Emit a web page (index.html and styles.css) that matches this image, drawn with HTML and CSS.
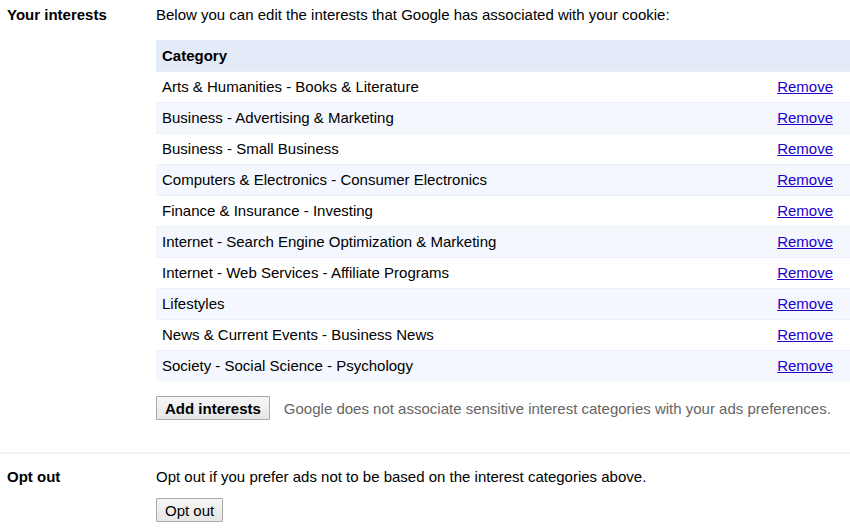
FILE: index.html
```html
<!DOCTYPE html>
<html>
<head>
<meta charset="utf-8">
<link rel="stylesheet" href="styles.css">
</head>
<body>
<div class="section">
  <div class="label">Your interests</div>
  <div class="content">
    <p class="intro">Below you can edit the interests that Google has associated with your cookie:</p>
    <table class="cats">
      <thead><tr><th>Category</th><th></th></tr></thead>
      <tbody>
        <tr><td>Arts &amp; Humanities - Books &amp; Literature</td><td class="act"><a href="#">Remove</a></td></tr>
        <tr><td>Business - Advertising &amp; Marketing</td><td class="act"><a href="#">Remove</a></td></tr>
        <tr><td>Business - Small Business</td><td class="act"><a href="#">Remove</a></td></tr>
        <tr><td>Computers &amp; Electronics - Consumer Electronics</td><td class="act"><a href="#">Remove</a></td></tr>
        <tr><td>Finance &amp; Insurance - Investing</td><td class="act"><a href="#">Remove</a></td></tr>
        <tr><td>Internet - Search Engine Optimization &amp; Marketing</td><td class="act"><a href="#">Remove</a></td></tr>
        <tr><td>Internet - Web Services - Affiliate Programs</td><td class="act"><a href="#">Remove</a></td></tr>
        <tr><td>Lifestyles</td><td class="act"><a href="#">Remove</a></td></tr>
        <tr><td>News &amp; Current Events - Business News</td><td class="act"><a href="#">Remove</a></td></tr>
        <tr><td>Society - Social Science - Psychology</td><td class="act"><a href="#">Remove</a></td></tr>
      </tbody>
    </table>
    <div class="actions">
      <button class="btn bold">Add interests</button>
      <span class="note">Google does not associate sensitive interest categories with your ads preferences.</span>
    </div>
  </div>
</div>
<div class="section sep">
  <div class="label">Opt out</div>
  <div class="content">
    <p class="intro">Opt out if you prefer ads not to be based on the interest categories above.</p>
    <button class="btn">Opt out</button>
  </div>
</div>
</body>
</html>
```
FILE: styles.css
```css
html, body { margin: 0; padding: 0; background: #fff; }
body {
  font-family: "Liberation Sans", Arial, sans-serif;
  font-size: 15px;
  color: #000;
  overflow: hidden;
}
.section {
  display: flex;
}
.label {
  width: 149px;
  padding-left: 7px;
  font-weight: bold;
  padding-top: 6px;
}
.content {
  flex: 1;
  padding-top: 6px;
}
.intro {
  margin: 0 0 17px 0;
  line-height: 17px;
}
.cats {
  width: 100%;
  border-collapse: collapse;
}
.cats th {
  background: #e3eaf8;
  text-align: left;
  font-weight: bold;
  height: 31px;
  padding: 0 6px;
  box-sizing: border-box;
}
.cats td {
  height: 31px;
  padding: 0 6px;
  box-sizing: border-box;
  border-top: 1px solid #eaeff9;
}
.cats tbody tr:nth-child(even) td { background: #f4f7fd; }
.cats td.act {
  text-align: right;
  padding-right: 17px;
}
.cats a { color: #2200cc; text-decoration: underline; }
.actions {
  display: flex;
  align-items: center;
  gap: 14px;
  margin-top: 15px;
  padding-bottom: 32px;
}
.btn {
  font-family: "Liberation Sans", Arial, sans-serif;
  font-size: 15px;
  color: #000;
  background: linear-gradient(#f6f6f6, #e6e6e6);
  border: 1px solid #a9a9a9;
  border-radius: 1px;
  height: 24px;
  padding: 0 8px;
}
.btn.bold { font-weight: bold; }
.note { color: #666; }
.sep {
  border-top: 2px solid #f2f4fb;
  padding-top: 8px;
}
.sep .intro { margin-bottom: 13px; }
```
